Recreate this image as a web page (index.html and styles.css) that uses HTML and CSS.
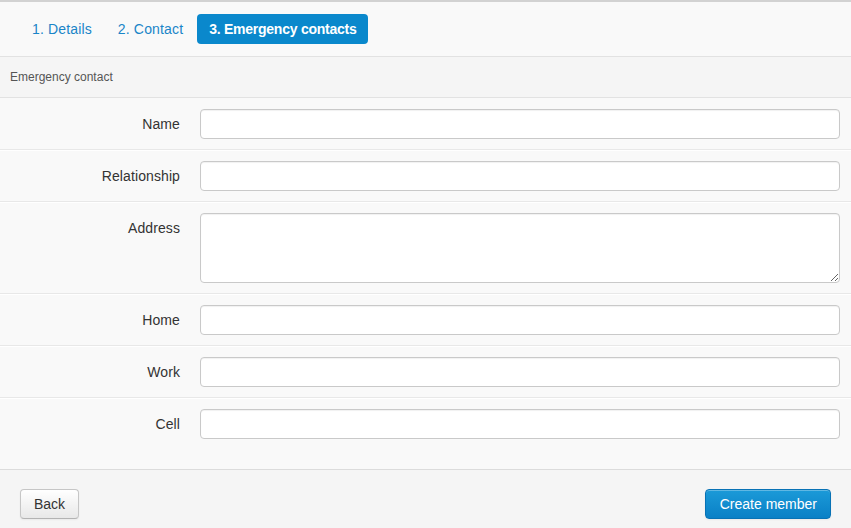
FILE: index.html
```html
<!DOCTYPE html>
<html>
<head>
<meta charset="utf-8">
<link rel="stylesheet" href="styles.css">
</head>
<body>
<div class="page">
  <ul class="steps">
    <li><a class="step">1. Details</a></li>
    <li><a class="step">2. Contact</a></li>
    <li><a class="step active">3. Emergency contacts</a></li>
  </ul>
  <div class="section-title">Emergency contact</div>
  <form class="form">
    <div class="row"><label class="label">Name</label><input class="field" type="text"></div>
    <div class="row"><label class="label">Relationship</label><input class="field" type="text"></div>
    <div class="row"><label class="label">Address</label><textarea class="field area"></textarea></div>
    <div class="row"><label class="label">Home</label><input class="field" type="text"></div>
    <div class="row"><label class="label">Work</label><input class="field" type="text"></div>
    <div class="row last"><label class="label">Cell</label><input class="field" type="text"></div>
  </form>
  <div class="actions">
    <button class="btn">Back</button>
    <button class="btn primary">Create member</button>
  </div>
</div>
</body>
</html>
```
FILE: styles.css
```css
* { box-sizing: border-box; }
html, body { margin: 0; padding: 0; }
body {
  font-family: "Liberation Sans", Arial, sans-serif;
  font-size: 14px;
  color: #333;
  background: #f5f5f5;
  width: 851px;
  height: 528px;
  overflow: hidden;
}
.page { display: flex; flex-direction: column; height: 528px; }
.steps {
  list-style: none;
  margin: 0;
  padding: 12px 20px 12px 20px;
  display: flex;
  gap: 2px;
  background: #f9f9f9;
  border-top: 2px solid #d2d2d2;
  border-bottom: 1px solid #e2e2e2;
}
.step {
  display: block;
  padding: 6px 12px;
  line-height: 18px;
  color: #1a85c8;
  border-radius: 4px;
  font-size: 14px;
  letter-spacing: 0.15px;
}
.step.active { background: #0a88cc; color: #fff; font-weight: bold; letter-spacing: -0.25px; }
.section-title {
  height: 41px;
  padding: 13px 10px 0;
  font-size: 12px;
  color: #555;
  background: #f5f5f5;
  border-bottom: 1px solid #e2e2e2;
}
.form { margin: 0; background: #f9f9f9; }
.row {
  display: flex;
  align-items: flex-start;
  gap: 20px;
  padding: 11px 11px 10px 0;
  border-bottom: 1px solid #e8e8e8;
  box-shadow: inset 0 1px 0 #fff;
}
.row:first-child { box-shadow: none; }
.row.last { padding-bottom: 30px; border-bottom: 1px solid #dcdcdc; }
.label {
  width: 180px;
  flex: none;
  text-align: right;
  padding-top: 6px;
  line-height: 18px;
  color: #333;
  letter-spacing: 0.1px;
}
.field {
  flex: 1;
  height: 30px;
  margin: 0;
  border: 1px solid #c9c9c9;
  border-radius: 4px;
  background: #fff;
  box-shadow: inset 0 1px 1px rgba(0,0,0,0.06);
  font: 14px "Liberation Sans", Arial, sans-serif;
  padding: 4px 6px;
}
.area { height: 70px; resize: vertical; }
.actions {
  flex: 1;
  display: flex;
  justify-content: space-between;
  align-items: flex-start;
  padding: 19px 20px 0;
  background: #f5f5f5;
}
.btn {
  height: 30px;
  padding: 0 13px;
  font: 14px "Liberation Sans", Arial, sans-serif;
  color: #333;
  border: 1px solid #c6c6c6;
  border-bottom-color: #b3b3b3;
  border-radius: 4px;
  background: linear-gradient(#ffffff, #e8e8e8);
  box-shadow: inset 0 1px 0 rgba(255,255,255,0.3), 0 1px 2px rgba(0,0,0,0.05);
}
.btn.primary {
  color: #fff;
  border-color: #0872b5;
  background: linear-gradient(#1b9ad8, #0a80c6);
  padding: 0 13px 0 14px;
}
```
